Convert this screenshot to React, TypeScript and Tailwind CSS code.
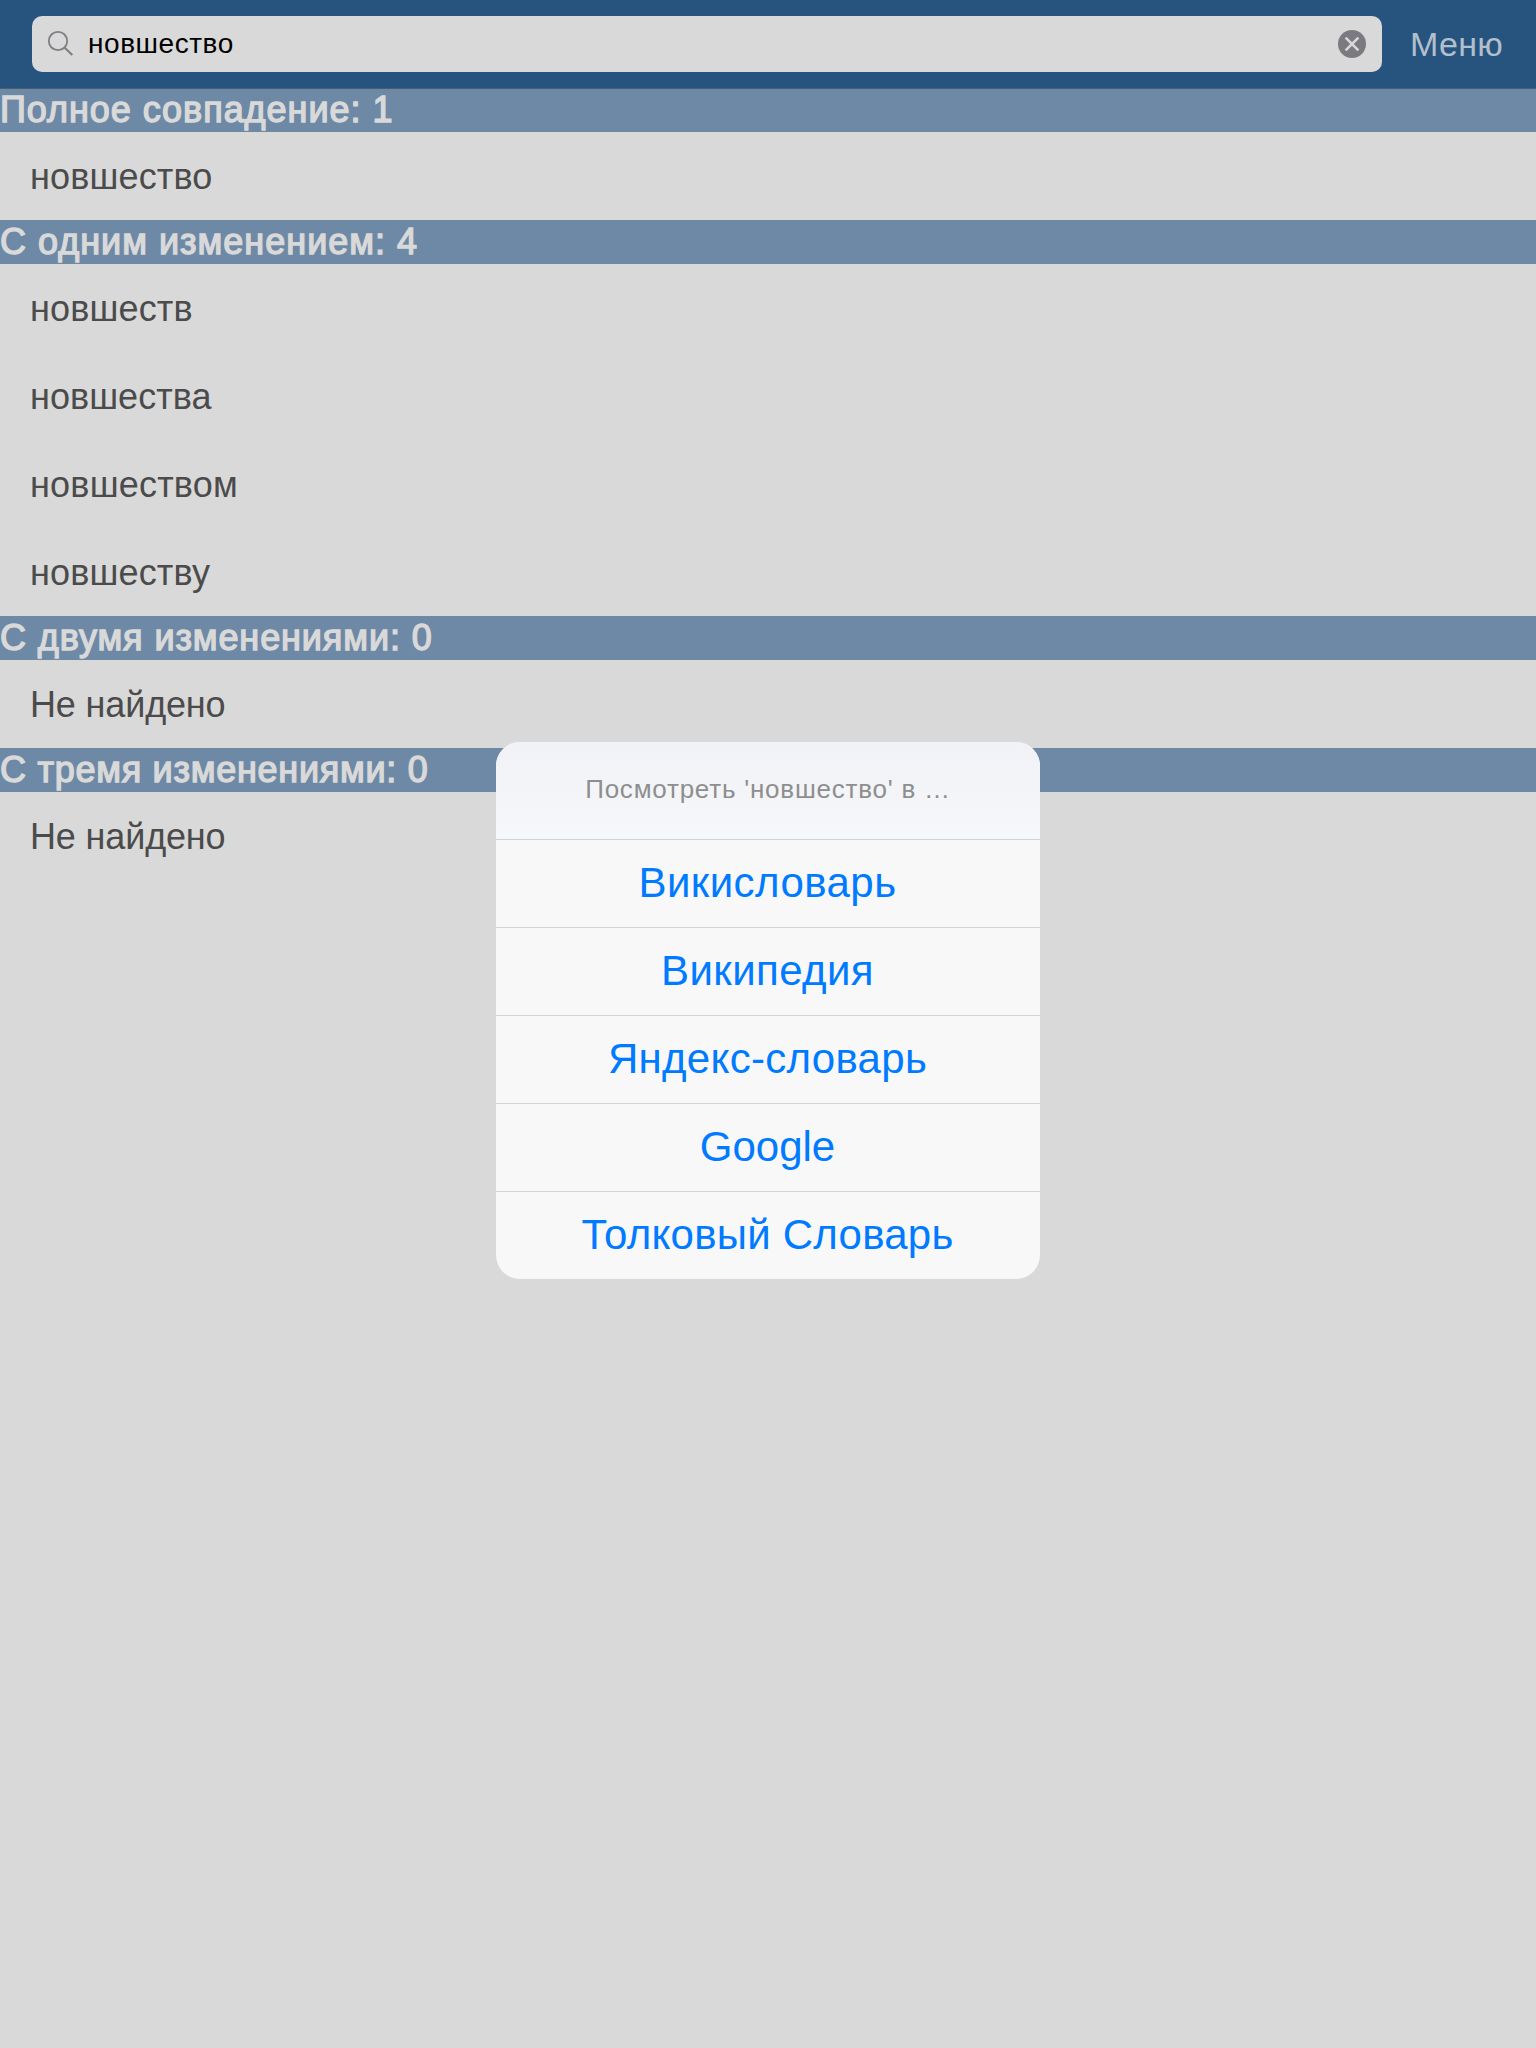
import React from "react";

type Row = { text: string; spacing: string };
type Section = { title: string; spacing: string; rows: Row[] };

const sections: Section[] = [
  {
    title: "Полное совпадение: 1",
    spacing: "tracking-[0.96px]",
    rows: [{ text: "новшество", spacing: "tracking-[0.15px]" }],
  },
  {
    title: "С одним изменением: 4",
    spacing: "tracking-[1px]",
    rows: [
      { text: "новшеств", spacing: "tracking-[0.15px]" },
      { text: "новшества", spacing: "tracking-[0.05px]" },
      { text: "новшеством", spacing: "tracking-[0.2px]" },
      { text: "новшеству", spacing: "tracking-[0.15px]" },
    ],
  },
  {
    title: "С двумя изменениями: 0",
    spacing: "tracking-[0.9px]",
    rows: [{ text: "Не найдено", spacing: "tracking-[-0.15px]" }],
  },
  {
    title: "С тремя изменениями: 0",
    spacing: "tracking-[0.73px]",
    rows: [{ text: "Не найдено", spacing: "tracking-[-0.15px]" }],
  },
];

const options = [
  { text: "Викисловарь", spacing: "tracking-[0.45px]" },
  { text: "Википедия", spacing: "tracking-[0.4px]" },
  { text: "Яндекс-словарь", spacing: "tracking-[0.3px]" },
  { text: "Google", spacing: "tracking-[0px]" },
  { text: "Толковый Словарь", spacing: "tracking-[0.24px]" },
];

function SearchIcon() {
  return (
    <svg className="h-7 w-7 shrink-0" viewBox="0 0 28 28" fill="none" stroke="#7e7e84">
      <circle cx="11" cy="11" r="9.2" strokeWidth="1.8" />
      <path d="M17.7 17.7 25.3 25" strokeWidth="2.1" />
    </svg>
  );
}

function ClearIcon() {
  return (
    <svg className="h-7 w-7 shrink-0" viewBox="0 0 28 28">
      <circle cx="14" cy="14" r="14" fill="#7b7a80" />
      <path d="M7.6 7.6 20.4 20.4M20.4 7.6 7.6 20.4" stroke="#d9d9d9" strokeWidth="2.5" />
    </svg>
  );
}

function TopBar() {
  return (
    <header className="flex h-[89px] items-start border-b border-[#4a5d70] bg-[#26547e] pt-4 pl-8">
      <div className="flex h-14 w-[1350px] items-center rounded-[10px] bg-[#d9d9d9] pr-4 pl-[15px]">
        <SearchIcon />
        <span className="ml-[13px] flex-1 text-[28px] leading-[56px] tracking-[0.55px] text-black">новшество</span>
        <ClearIcon />
      </div>
      <button className="ml-[28px] text-[34px] leading-[56px] tracking-[0.3px] text-[#b3bfcc]">Меню</button>
    </header>
  );
}

function SectionBlock({ section, first }: { section: Section; first: boolean }) {
  return (
    <section>
      <h2
        className={`flex items-start overflow-hidden bg-[#6e89a6] text-[36px] font-normal text-[#d9d9d9] [-webkit-text-stroke:1.4px_#d9d9d9] ${
          first ? "h-[43px]" : "h-11"
        }`}
      >
        <span className={`whitespace-pre ${first ? "leading-[42px]" : "leading-[44px]"} ${section.spacing}`}>
          {section.title}
        </span>
      </h2>
      {section.rows.map((row, i) => (
        <div key={i} className="h-[88px] pt-px pl-[30px] text-[36px] text-[#4b4b4b]">
          <span className={`block leading-[88px] ${row.spacing}`}>{row.text}</span>
        </div>
      ))}
    </section>
  );
}

function ActionDialog() {
  return (
    <div
      role="dialog"
      className="absolute top-[742px] left-[496px] w-[544px] overflow-hidden rounded-[24px] bg-[#f8f8f8] text-center"
    >
      <p className="h-[97px] bg-linear-to-b from-[#f0f2f7] to-[#f6f7f9] pt-[23px] text-[26px] leading-[48px] tracking-[0.77px] text-[#8e8e8f]">
        Посмотреть 'новшество' в …
      </p>
      {options.map((option) => (
        <button
          key={option.text}
          className={`block h-[88px] w-full border-t border-[#d3d4d7] pt-px pr-px pb-[2px] text-[42px] leading-[84px] text-[#007aff] ${option.spacing}`}
        >
          {option.text}
        </button>
      ))}
    </div>
  );
}

export default function App() {
  return (
    <main className="relative h-[2048px] w-[1536px] overflow-hidden bg-[#d9d9d9] font-['Liberation_Sans',Arial,sans-serif]">
      <TopBar />
      {sections.map((section, i) => (
        <SectionBlock key={section.title} section={section} first={i === 0} />
      ))}
      <ActionDialog />
    </main>
  );
}
